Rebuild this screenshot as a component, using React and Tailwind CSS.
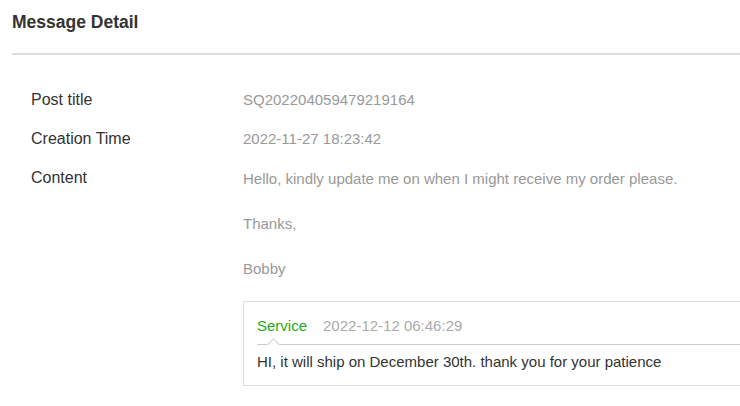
import React from 'react';

const rows = [
  { label: 'Post title', value: 'SQ202204059479219164' },
  { label: 'Creation Time', value: '2022-11-27 18:23:42' },
];

const contentLines = [
  'Hello, kindly update me on when I might receive my order please.',
  'Thanks,',
  'Bobby',
];

export default function App() {
  return (
    <div className="min-h-screen bg-white pl-3 overflow-hidden" style={{ fontFamily: '"Liberation Sans", Arial, sans-serif' }}>
      <div className="pt-[11px] pb-[20px] border-b-2 border-[#dddddd]">
        <h1 className="text-[17.5px] leading-[22px] font-bold text-[#333333]">Message Detail</h1>
      </div>

      <div className="pl-[19px] pt-[35px] flex flex-col gap-[19px] leading-5">
        {rows.map((row) => (
          <div key={row.label} className="flex">
            <div className="w-[212px] shrink-0 text-[16px] text-[#333333]">{row.label}</div>
            <div className="text-[15px] text-[#999999]">{row.value}</div>
          </div>
        ))}

        <div className="flex">
          <div className="w-[212px] shrink-0 text-[16px] text-[#333333]">Content</div>
          <div className="flex-1 min-w-0 text-[15px]">
            <div className="flex flex-col gap-[25px] pt-[1px] text-[#999999]">
              {contentLines.map((line) => (
                <p key={line}>{line}</p>
              ))}
            </div>

            <div className="mt-[22px] w-[600px] border border-[#dddddd] px-[13px] pt-[14px] pb-[13px]">
              <div className="relative flex gap-4 pb-2 border-b border-[#cccccc]">
                <span className="text-[#1aad19]">Service</span>
                <span className="text-[#aaaaaa]">2022-12-12 06:46:29</span>
                <span className="absolute left-[12px] -bottom-[5px] w-[9px] h-[9px] rotate-45 bg-white border-t border-l border-[#cccccc]" />
              </div>
              <p className="mt-[7px] text-[#333333]">HI, it will ship on December 30th. thank you for your patience</p>
            </div>
          </div>
        </div>
      </div>
    </div>
  );
}
